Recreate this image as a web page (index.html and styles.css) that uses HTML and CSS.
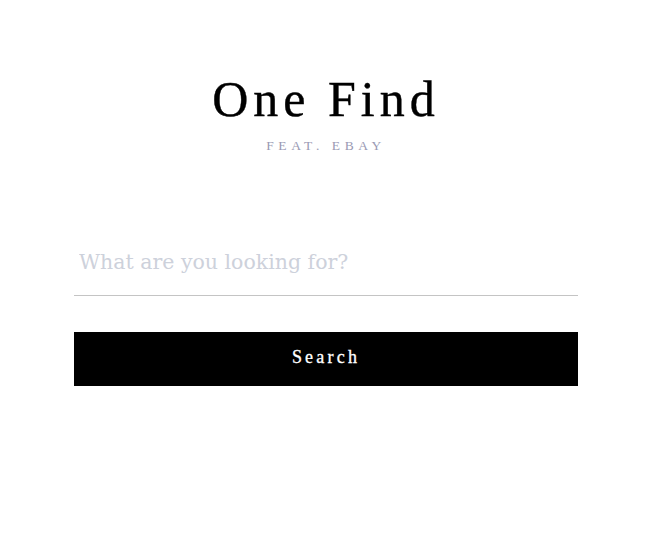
FILE: index.html
```html
<!DOCTYPE html>
<html>
<head>
<meta charset="utf-8">
<link rel="stylesheet" href="styles.css">
</head>
<body>
<main class="page">
  <header class="brand">
    <h1 class="title">One Find</h1>
    <p class="subtitle">FEAT. EBAY</p>
  </header>
  <form class="search">
    <input class="query" type="text" placeholder="What are you looking for?">
    <button class="btn" type="button">Search</button>
  </form>
</main>
</body>
</html>
```
FILE: styles.css
```css
html, body {
  margin: 0;
  padding: 0;
  background: #ffffff;
}
body {
  font-family: "Liberation Serif", "DejaVu Serif", serif;
}
.page {
  width: 504px;
  margin: 0 auto;
  padding-top: 70px;
  display: flex;
  flex-direction: column;
}
.brand {
  display: flex;
  flex-direction: column;
  align-items: center;
}
.title {
  margin: 0;
  font-weight: normal;
  font-size: 50px;
  line-height: 58px;
  letter-spacing: 5px;
  color: #000;
  -webkit-text-stroke: 0.4px #000;
}
.subtitle {
  margin: 10px 0 0;
  font-size: 13.5px;
  line-height: 16px;
  letter-spacing: 4.6px;
  color: #9a9ab4;
}
.search {
  margin-top: 79px;
  display: flex;
  flex-direction: column;
}
.query {
  border: none;
  border-bottom: 1px solid #c4c4c4;
  outline: none;
  font-family: "DejaVu Serif", serif;
  font-size: 20.5px;
  height: 63px;
  padding: 0 5px 4px;
  box-sizing: border-box;
  color: #333;
  background: transparent;
}
.query::placeholder {
  color: #cdd1db;
}
.btn {
  margin-top: 36px;
  height: 54px;
  padding: 0 0 3px;
  background: #000;
  color: #fff;
  border: none;
  font-family: "Liberation Serif", serif;
  font-size: 18px;
  letter-spacing: 3.2px;
  cursor: pointer;
  -webkit-text-stroke: 0.3px #fff;
}
```
